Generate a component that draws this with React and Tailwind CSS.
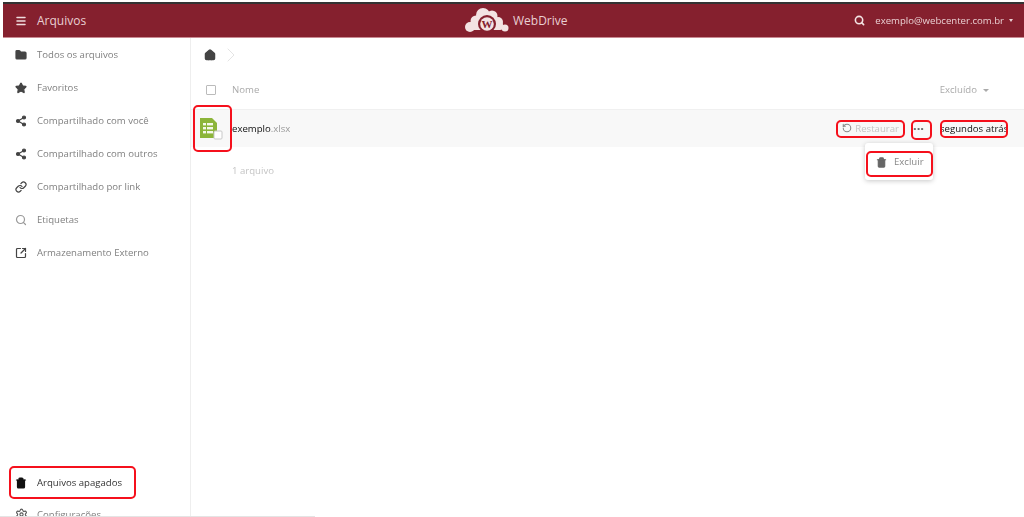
import { Menu, Search, Folder, Star, Share2, Link, SquareArrowOutUpRight, Trash2, Settings, Home, ChevronRight, RotateCcw } from 'lucide-react';

const navItems = [
  { label: 'Todos os arquivos', icon: Folder, fill: true },
  { label: 'Favoritos', icon: Star, fill: true },
  { label: 'Compartilhado com você', icon: Share2, fill: true },
  { label: 'Compartilhado com outros', icon: Share2, fill: true },
  { label: 'Compartilhado por link', icon: Link },
  { label: 'Etiquetas', icon: Search, light: true },
  { label: 'Armazenamento Externo', icon: SquareArrowOutUpRight },
];

const NavItem = ({ item, dark }) => {
  const Icon = item.icon;
  return (
    <div className="h-[33px] shrink-0 flex items-center pl-[15px]">
      <Icon
        size={12}
        strokeWidth={2.4}
        className={`shrink-0 ${dark ? 'text-[#111]' : item.light ? 'text-[#999]' : 'text-[#444]'}`}
        fill={item.fill || dark ? 'currentColor' : 'none'}
      />
      <span className={`ml-[10px] pt-[2px] text-[9.6px] whitespace-nowrap ${dark ? 'text-[#333]' : 'text-[#808080]'}`}>{item.label}</span>
    </div>
  );
};

const Logo = () => (
  <svg width="46" height="30" viewBox="0 0 46 30" className="shrink-0">
    <g transform="translate(0 -2)">
      <g fill="#f3e3e3">
        <circle cx="7" cy="23" r="5" />
        <circle cx="13" cy="17" r="5.5" />
        <circle cx="20" cy="11" r="7" />
        <circle cx="29" cy="12" r="5.5" />
        <circle cx="35" cy="18" r="5" />
        <circle cx="42" cy="24" r="3.5" />
        <rect x="6" y="18" width="34" height="8" rx="3" />
      </g>
      <circle cx="24" cy="20" r="9" fill="#85202e" />
      <circle cx="24" cy="20" r="6.8" fill="#f3e3e3" />
      <text x="24" y="24" textAnchor="middle" fontSize="11" fontWeight="700" fontFamily="Liberation Serif, serif" fill="#85202e">W</text>
    </g>
  </svg>
);

const SheetIcon = () => (
  <svg width="24" height="24" viewBox="0 0 24 24">
    <path d="M1 1h12l5 5v15H1z" fill="#8cb53a" />
    <g fill="#f4f8ea">
      <rect x="4" y="6" width="3" height="2.4" />
      <rect x="8" y="6" width="6" height="2.4" />
      <rect x="4" y="10" width="3" height="2.4" />
      <rect x="8" y="10" width="6" height="2.4" />
      <rect x="4" y="14" width="3" height="2.4" />
      <rect x="8" y="14" width="6" height="2.4" />
    </g>
    <rect x="15" y="14" width="8" height="8" rx="1" fill="#fff" stroke="#c8c8c8" />
  </svg>
);

const Mark = ({ className }) => (
  <div className={`absolute border-2 border-[#f5101c] rounded-[5px] pointer-events-none ${className}`} />
);

export default function App() {
  return (
    <div className="relative w-[1024px] h-[517px] overflow-hidden bg-white flex flex-col font-['Open_Sans','Liberation_Sans',sans-serif]">
      <div className="flex-1 flex flex-col min-h-0 blur-[0.7px]">
        {/* top bar */}
        <div className="h-[2px] shrink-0" />
        <div className="h-[2px] shrink-0 bg-[#333] ml-[3px]" />
        <header className="h-[34px] shrink-0 ml-[3px] pt-[1px] bg-[#85202e] border-b border-[#c98a92] flex items-center text-[#e9cfd2]">
          <div className="w-[327px] flex items-center pl-[12px]">
            <Menu size={12} strokeWidth={3} className="text-[#efdcde]" />
            <span className="ml-[10px] text-[12px]">Arquivos</span>
          </div>
          <div className="w-[400px] flex items-center pl-[133px]">
            <Logo />
            <span className="ml-[4px] text-[12px]">WebDrive</span>
          </div>
          <div className="flex-1 flex items-center justify-end pr-[11px]">
            <Search size={11} strokeWidth={3.5} className="text-[#f3e3e3]" />
            <span className="ml-[10px] text-[9.6px] whitespace-nowrap">exemplo@webcenter.com.br</span>
            <span className="ml-[5px] border-x-[2.5px] border-x-transparent border-t-[3px] border-t-[#e9cfd2]" />
          </div>
        </header>

        <div className="flex-1 flex min-h-0">
          {/* sidebar */}
          <aside className="w-[191px] shrink-0 border-r border-[#eeeeee] flex flex-col">
            {navItems.map((item) => (
              <NavItem key={item.label} item={item} />
            ))}
            <div className="flex-1" />
            <NavItem item={{ label: 'Arquivos apagados', icon: Trash2 }} dark />
            <div className="h-[18px] shrink-0 flex items-start pt-[9px] pl-[15px] overflow-hidden">
              <Settings size={13} className="text-[#555] shrink-0" />
              <span className="ml-[9px] text-[9.6px] text-[#808080]">Configurações</span>
            </div>
          </aside>

          {/* file list */}
          <main className="flex-1 flex flex-col min-w-0">
            <div className="h-[33px] shrink-0 flex items-center pl-[13px]">
              <Home size={12} strokeWidth={3} className="text-[#444]" fill="currentColor" />
              <ChevronRight size={24} strokeWidth={0.8} className="ml-[3px] text-[#ddd]" />
            </div>
            <div className="h-[38px] shrink-0 flex items-center pl-[15px] pr-[35px] text-[9.6px] text-[#aaa]">
              <span className="w-[10px] h-[10px] border border-[#bbb] rounded-[1px]" />
              <span className="ml-[16px]">Nome</span>
              <span className="ml-auto">Excluído</span>
              <span className="ml-[6px] border-x-[3px] border-x-transparent border-t-[3px] border-t-[#aaa]" />
            </div>
            <div className="relative h-[38px] shrink-0 bg-[#f8f8f8] border-t border-[#f0f0f0] flex items-center text-[9.6px]">
              <div className="ml-[8px] w-[24px] shrink-0">
                <SheetIcon />
              </div>
              <span className="ml-[9px] pt-[2px] text-[#111]">
                exemplo<span className="text-[#999]">.xlsx</span>
              </span>
              <div className="ml-auto flex items-center pr-[16px] whitespace-nowrap">
                <RotateCcw size={10} strokeWidth={2.5} className="text-[#888]" />
                <span className="ml-[3px] pt-[2px] text-[#c4c4c4]">Restaurar</span>
                <span className="ml-[12px] w-[15px] text-center text-[13px] text-[#666] font-bold leading-none">···</span>
                <span className="ml-[14px] w-[68px] pt-[2px] text-[#111]">segundos atrás</span>
              </div>
              {/* actions popup */}
              <div className="absolute left-[674px] top-[33px] w-[68px] h-[37px] pt-[2px] bg-white rounded-[3px] shadow-[0_1px_5px_rgba(0,0,0,0.22)] flex items-center pl-[11px]">
                <Trash2 size={11} strokeWidth={2.5} fill="currentColor" className="text-[#666]" />
                <span className="ml-[7px] text-[9.6px] text-[#888]">Excluir</span>
              </div>
            </div>
            <div className="pl-[41px] pt-[17px] text-[9.6px] text-[#c4c4c4]">1 arquivo</div>
          </main>
        </div>
      </div>

      {/* bottom edge */}
      <div className="absolute left-0 bottom-0 w-[315px] h-px bg-[#e4e4e4]" />

      {/* red highlight marks */}
      <Mark className="left-[193px] top-[105px] w-[39px] h-[47px]" />
      <Mark className="left-[836px] top-[120px] w-[69px] h-[18px]" />
      <Mark className="left-[911px] top-[120px] w-[21px] h-[20px]" />
      <Mark className="left-[940px] top-[120px] w-[68px] h-[18px]" />
      <Mark className="left-[866px] top-[151px] w-[67px] h-[26px]" />
      <Mark className="left-[9px] top-[466px] w-[127px] h-[33px]" />
    </div>
  );
}
